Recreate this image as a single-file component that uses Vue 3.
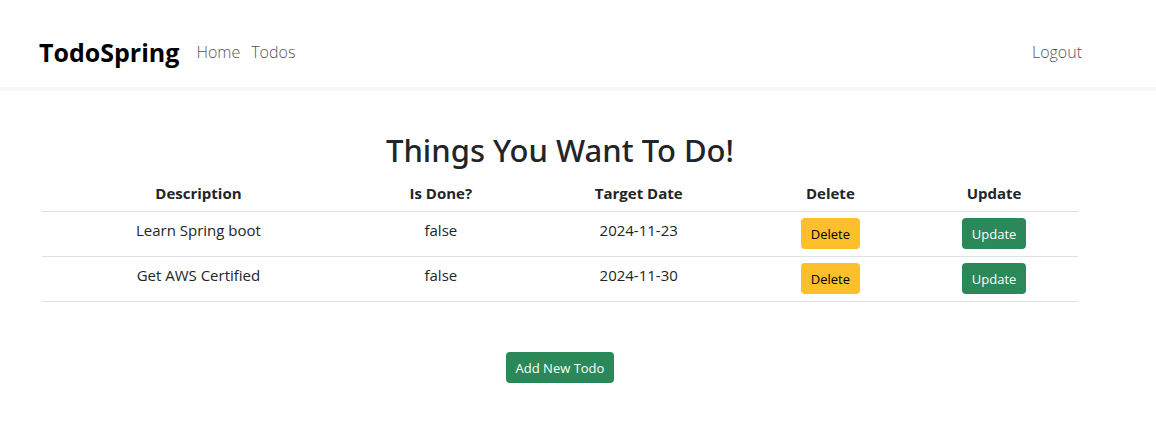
<script setup>
const columns = [
  { name: 'Description', width: '30.2%' },
  { name: 'Is Done?', width: '16.6%' },
  { name: 'Target Date', width: '21.6%' },
  { name: 'Delete', width: '15.4%' },
  { name: 'Update', width: '16.2%' },
]
const todos = [
  { id: 1, description: 'Learn Spring boot', done: false, date: '2024-11-23' },
  { id: 2, description: 'Get AWS Certified', done: false, date: '2024-11-30' },
]
</script>

<template>
  <nav class="navbar">
    <a class="brand" href="#">TodoSpring</a>
    <a class="link" href="#">Home</a>
    <a class="link" href="#">Todos</a>
    <a class="link logout" href="#">Logout</a>
  </nav>
  <main class="content">
    <h1>Things You Want To Do!</h1>
    <table>
      <colgroup>
        <col v-for="c in columns" :key="c.name" :style="{ width: c.width }" />
      </colgroup>
      <thead>
        <tr>
          <th v-for="c in columns" :key="c.name" scope="col">{{ c.name }}</th>
        </tr>
      </thead>
      <tbody>
        <tr v-for="t in todos" :key="t.id">
          <td>{{ t.description }}</td>
          <td>{{ t.done }}</td>
          <td>{{ t.date }}</td>
          <td><button type="button" class="btn warning">Delete</button></td>
          <td><button type="button" class="btn success">Update</button></td>
        </tr>
      </tbody>
    </table>
    <button type="button" class="btn success add">Add New Todo</button>
  </main>
</template>

<style>
body {
  margin: 0;
  background: #fff;
  color: #212529;
  font-family: "Segoe UI", "Open Sans", "Noto Sans", sans-serif;
  font-size: 15px;
  line-height: 24px;
}
</style>

<style scoped>
.navbar {
  display: flex;
  align-items: center;
  gap: 11px;
  padding: 32px 74px 15px 39px;
  border-bottom: 4px solid #f8f8f8;
}
.brand {
  margin-right: 6px;
  color: #000;
  font-size: 25px;
  font-weight: 700;
  line-height: 40px;
  text-decoration: none;
}
.link {
  color: #555;
  font-size: 16px;
  font-weight: 300;
  text-decoration: none;
}
.logout {
  margin-left: auto;
}
.content {
  display: flex;
  flex-direction: column;
  align-items: center;
  padding: 40px 78px 38px 42px;
}
h1 {
  margin: 0 0 7px;
  font-family: "Segoe UI", "Noto Sans", "Open Sans", sans-serif;
  font-size: 31px;
  font-weight: 500;
  line-height: 38px;
}
table {
  width: 100%;
  table-layout: fixed;
  border-collapse: collapse;
  text-align: center;
}
th,
td {
  padding: 6px 8px 7px;
  border-bottom: 1px solid #dee2e6;
  vertical-align: top;
}
th {
  padding: 5px 8px 6px;
  font-weight: 700;
}
.btn {
  display: block;
  margin: 0 auto;
  padding: 6px 10px 4px;
  border: 0;
  border-radius: 4px;
  font-family: inherit;
  font-size: 13px;
  line-height: 21px;
}
.warning {
  background: #fdbf2b;
  color: #000;
}
.success {
  background: #2b8859;
  color: #fff;
}
.add {
  margin-top: 50px;
}
</style>
